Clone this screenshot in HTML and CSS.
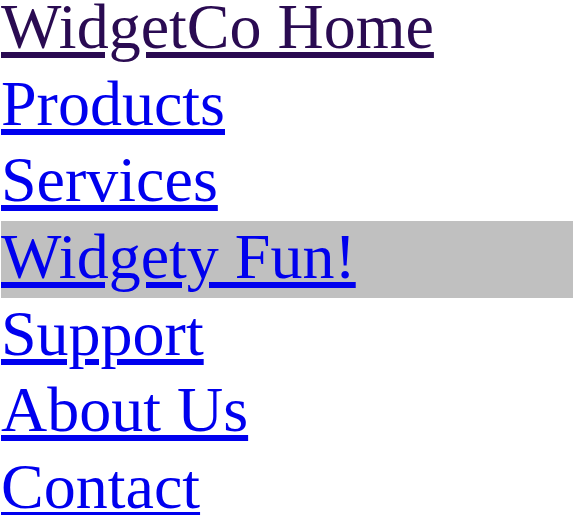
FILE: index.html
```html
<!DOCTYPE html>
<html lang="en">
<head>
<meta charset="utf-8">
<title>WidgetCo</title>
<link rel="stylesheet" href="styles.css">
</head>
<body>
<nav class="site-nav">
  <ul class="nav-list">
    <li class="nav-item"><a class="nav-link visited" href="#home">WidgetCo Home</a></li>
    <li class="nav-item"><a class="nav-link" href="#products">Products</a></li>
    <li class="nav-item"><a class="nav-link" href="#services">Services</a></li>
    <li class="nav-item current"><a class="nav-link" href="#fun">Widgety Fun!</a></li>
    <li class="nav-item"><a class="nav-link" href="#support">Support</a></li>
    <li class="nav-item"><a class="nav-link" href="#about">About Us</a></li>
    <li class="nav-item"><a class="nav-link" href="#contact">Contact</a></li>
  </ul>
</nav>
</body>
</html>
```
FILE: styles.css
```css
html, body {
  margin: 0;
  padding: 0;
  background: #ffffff;
  overflow: hidden;
}

.site-nav {
  font-family: "Liberation Serif", "Times New Roman", serif;
  font-size: 64px;
}

.nav-list {
  list-style: none;
  margin: -9px 0 0 1px;
  padding: 0;
}

.nav-item {
  line-height: 72px;
  padding-bottom: 4.67px;
}

.nav-item.current {
  background: #c0c0c0;
}

.nav-link {
  color: #0000ee;
  text-decoration: underline;
}

.nav-link.visited {
  color: #2a0b52;
}
```
